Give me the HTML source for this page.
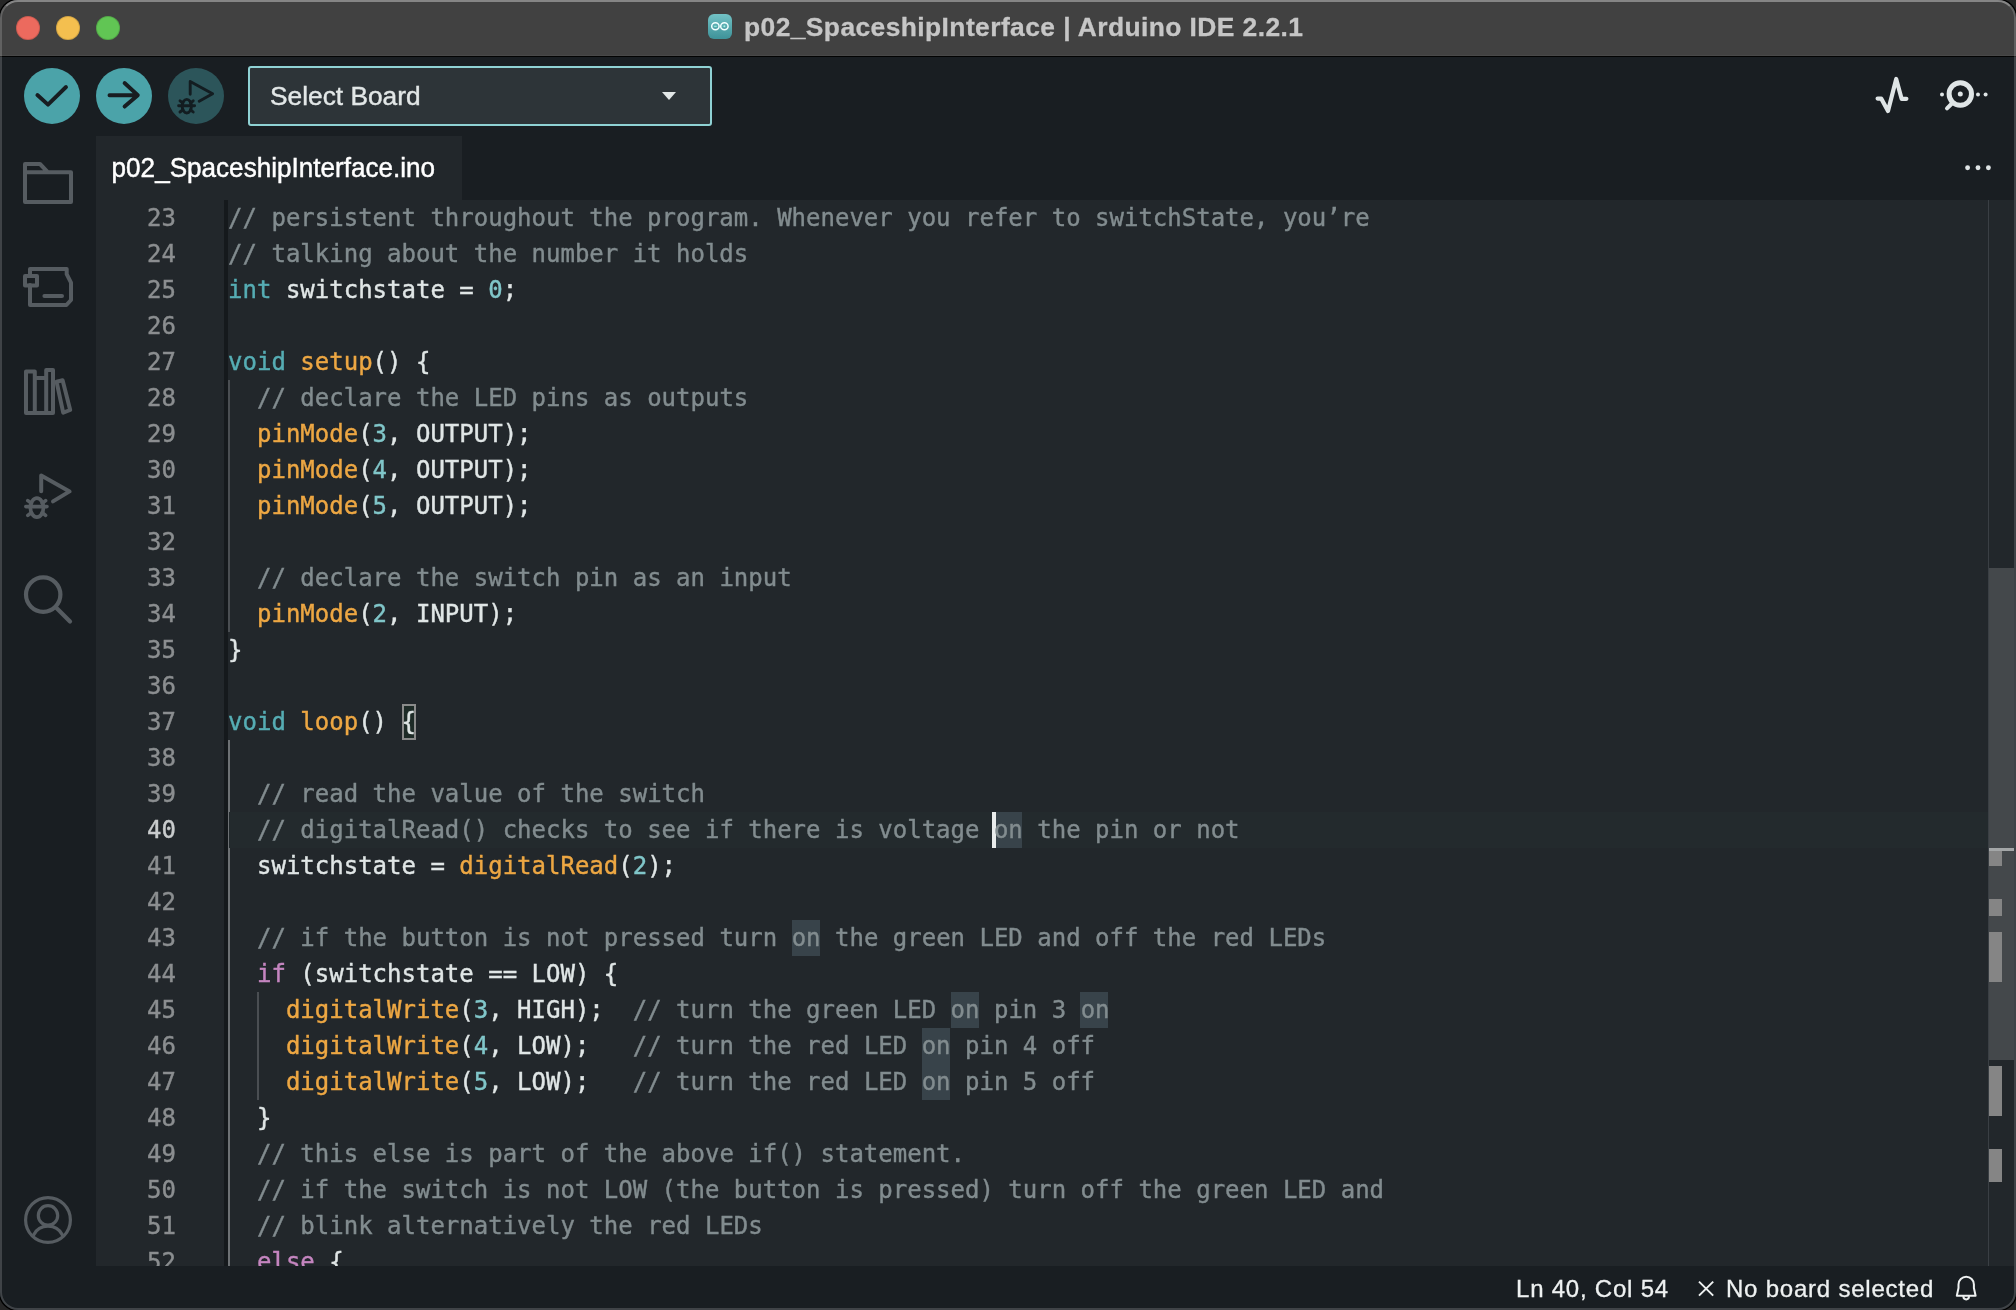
<!DOCTYPE html>
<html lang="en">
<head>
<meta charset="utf-8">
<title>p02_SpaceshipInterface | Arduino IDE 2.2.1</title>
<style>
*{box-sizing:border-box;margin:0;padding:0}
html,body{width:2016px;height:1310px;overflow:hidden;background:#262626}
body{font-family:"Liberation Sans",sans-serif;position:relative}
#win{will-change:transform;position:absolute;left:0;top:0;width:2016px;height:1310px;border-radius:18px;overflow:hidden;background:#191e22;box-shadow:0 0 0 1.5px #000}
#frame{position:absolute;left:0;top:0;width:2016px;height:1310px;border-radius:18px;border:2px solid rgba(255,255,255,.17);border-top-color:rgba(255,255,255,.36);pointer-events:none;z-index:50}
#title{position:absolute;left:0;top:0;width:2016px;height:57px;background:#414141;border-bottom:1px solid #020303;box-shadow:inset 0 -1px 0 #484848}
.tl{position:absolute;top:16px;width:24px;height:24px;border-radius:50%;box-shadow:inset 0 0 0 1px rgba(0,0,0,.14)}
#ttext{position:absolute;left:744px;top:11.5px;-webkit-text-stroke:.3px #c6c6c6;font-size:26.4px;line-height:30px;font-weight:bold;color:#c6c6c6;white-space:nowrap;letter-spacing:.42px}
#ticon{position:absolute;left:707.6px;top:13.9px;width:24.8px;height:24.8px;border-radius:6px;background:linear-gradient(#72c2c5,#3e9299)}
#toolbar{position:absolute;left:0;top:57px;width:2016px;height:79px;background:#191e22}
.btn{position:absolute;top:11px;width:56px;height:56px;border-radius:50%;background:#4ba3a9}
.btn.dis{background:#2c555a}
#board{position:absolute;left:248px;top:9px;width:464px;height:60px;border:2px solid #8fd2d4;border-radius:3px;background:#2d3438;color:#e2e7e7;font-size:26.3px;line-height:56px;padding-left:20px;-webkit-text-stroke:.4px #e2e7e7}
#board i{position:absolute;left:412.4px;top:24.4px;width:0;height:0;border-left:7.6px solid transparent;border-right:7.6px solid transparent;border-top:8.6px solid #e2e7e7}
#side{position:absolute;left:0;top:136px;width:96px;height:1130px;background:#191e22}
#tabs{position:absolute;left:96px;top:136px;width:1920px;height:64px;background:#191e22}
#tab{position:absolute;left:0;top:0;width:366px;height:64px;background:#22272b;color:#fff;font-size:26.1px;line-height:64px;padding-left:15.6px;white-space:nowrap}
#tab span{display:inline-block;height:64px;transform:translateY(.4px) scaleY(1.085);transform-origin:0 40.8px;-webkit-text-stroke:.45px #fff}
#editor{position:absolute;left:96px;top:200px;width:1918px;height:1066px;background:#22272b;overflow:hidden;-webkit-text-stroke:.4px;font-family:"DejaVu Sans Mono","Liberation Mono",monospace;font-size:24px}
#lines{position:absolute;left:0;top:0;width:100%}
.ln{position:relative;height:36px;line-height:36px;white-space:pre;color:#e0e6e6}
.no{position:absolute;left:0;top:0;width:80px;text-align:right;color:#8b8e90}
.act .no{color:#c9cccd}
.tx{position:absolute;left:132.1px;top:0;height:36px}
.c{color:#828c8f}.k{color:#56adb4}.f{color:#eda743}.n{color:#80c6c9}.w{color:#c586c0}
.hl{position:absolute;top:0;height:36px;width:28px;background:#38434a}
.bmb{position:absolute;top:0;height:36px;width:14.2px;border:2px solid #8b8b8b;background:#1e2b27}
.cur{position:absolute;top:0;width:3.6px;height:36px;background:#e9ecec}
.actbg{position:absolute;left:133px;top:0;width:1760px;height:36px;background:#232a2d}
.gd{position:absolute;width:2px;background:#4a4e52}
#gline{position:absolute;left:128px;top:0;width:4px;height:1066px;background:#15191c}
#sbar{position:absolute;left:1892px;top:0;width:26px;height:1066px;border-left:1px solid #3a3f44}
#sbar i{position:absolute;left:0;width:13px;background:#858585}
#slider{position:absolute;left:0;top:368px;width:25px;height:492px;background:#44484b}
#status{position:absolute;left:0;top:1266px;width:2016px;height:44px;background:#191e22;color:#eef1f1;font-size:24px;letter-spacing:.78px;line-height:44px;white-space:nowrap}
#status span{position:absolute;top:1.4px;-webkit-text-stroke:.3px #eef1f1}
</style>
</head>
<body>
<div id="win">
<div id="title">
<div class="tl" style="left:16px;background:#ec6a5e"></div>
<div class="tl" style="left:56px;background:#f4bf4f"></div>
<div class="tl" style="left:96px;background:#61c554"></div>
<div id="ticon"><svg width="24.8" height="24.8" viewBox="0 0 24.8 24.8" fill="none" stroke="#f2ffff" stroke-width="1.5" style="position:absolute;left:0;top:0"><ellipse cx="7.4" cy="12.3" rx="3.7" ry="3.5"/><ellipse cx="16.4" cy="12.3" rx="3.7" ry="3.5"/><path d="M6.1 12.3 H8.7" stroke="#93ead9" stroke-width="1.3"/><circle cx="16.4" cy="12.3" r="1" fill="#a5f3e6" stroke="none"/></svg></div>
<div id="ttext">p02_SpaceshipInterface | Arduino IDE 2.2.1</div>
</div>
<div id="toolbar">
<div class="btn" style="left:24px"></div>
<div class="btn" style="left:96px"></div>
<div class="btn dis" style="left:168px"></div>
<div id="board">Select Board<i></i></div>
</div>
<div id="side"></div>
<div id="tabs"><div id="tab"><span>p02_SpaceshipInterface.ino</span></div></div>
<div id="editor">
<div id="gline"></div>
<div class="gd" style="left:132px;top:180px;height:252px"></div>
<div class="gd" style="left:132px;top:540px;height:526px;background:#6d7174"></div>
<div class="gd" style="left:161px;top:792px;height:108px"></div>
<div id="lines">
<div class="ln"><span class="no">23</span><span class="tx"><span class="c">// persistent throughout the program. Whenever you refer to switchState, you’re</span></span></div>
<div class="ln"><span class="no">24</span><span class="tx"><span class="c">// talking about the number it holds</span></span></div>
<div class="ln"><span class="no">25</span><span class="tx"><span class="k">int</span> switchstate = <span class="n">0</span>;</span></div>
<div class="ln"><span class="no">26</span><span class="tx"></span></div>
<div class="ln"><span class="no">27</span><span class="tx"><span class="k">void</span> <span class="f">setup</span>() {</span></div>
<div class="ln"><span class="no">28</span><span class="tx">  <span class="c">// declare the LED pins as outputs</span></span></div>
<div class="ln"><span class="no">29</span><span class="tx">  <span class="f">pinMode</span>(<span class="n">3</span>, OUTPUT);</span></div>
<div class="ln"><span class="no">30</span><span class="tx">  <span class="f">pinMode</span>(<span class="n">4</span>, OUTPUT);</span></div>
<div class="ln"><span class="no">31</span><span class="tx">  <span class="f">pinMode</span>(<span class="n">5</span>, OUTPUT);</span></div>
<div class="ln"><span class="no">32</span><span class="tx"></span></div>
<div class="ln"><span class="no">33</span><span class="tx">  <span class="c">// declare the switch pin as an input</span></span></div>
<div class="ln"><span class="no">34</span><span class="tx">  <span class="f">pinMode</span>(<span class="n">2</span>, INPUT);</span></div>
<div class="ln"><span class="no">35</span><span class="tx">}</span></div>
<div class="ln"><span class="no">36</span><span class="tx"></span></div>
<div class="ln"><i class="bmb" style="left:306.2px"></i><span class="no">37</span><span class="tx"><span class="k">void</span> <span class="f">loop</span>() {</span></div>
<div class="ln"><span class="no">38</span><span class="tx"></span></div>
<div class="ln"><span class="no">39</span><span class="tx">  <span class="c">// read the value of the switch</span></span></div>
<div class="ln act"><i class="actbg"></i><i class="hl" style="left:897.8px"></i><i class="cur" style="left:896.2px"></i><span class="no">40</span><span class="tx">  <span class="c">// digitalRead() checks to see if there is voltage </span><span class="c">on</span><span class="c"> the pin or not</span></span></div>
<div class="ln"><span class="no">41</span><span class="tx">  switchstate = <span class="f">digitalRead</span>(<span class="n">2</span>);</span></div>
<div class="ln"><span class="no">42</span><span class="tx"></span></div>
<div class="ln"><i class="hl" style="left:695.7px"></i><span class="no">43</span><span class="tx">  <span class="c">// if the button is not pressed turn </span><span class="c">on</span><span class="c"> the green LED and off the red LEDs</span></span></div>
<div class="ln"><span class="no">44</span><span class="tx">  <span class="w">if</span> (switchstate == LOW) {</span></div>
<div class="ln"><i class="hl" style="left:984.4px"></i><i class="hl" style="left:854.5px"></i><span class="no">45</span><span class="tx">    <span class="f">digitalWrite</span>(<span class="n">3</span>, HIGH);  <span class="c">// turn the green LED </span><span class="c">on</span><span class="c"> pin 3 </span><span class="c">on</span></span></div>
<div class="ln"><i class="hl" style="left:825.6px"></i><span class="no">46</span><span class="tx">    <span class="f">digitalWrite</span>(<span class="n">4</span>, LOW);   <span class="c">// turn the red LED </span><span class="c">on</span><span class="c"> pin 4 off</span></span></div>
<div class="ln"><i class="hl" style="left:825.6px"></i><span class="no">47</span><span class="tx">    <span class="f">digitalWrite</span>(<span class="n">5</span>, LOW);   <span class="c">// turn the red LED </span><span class="c">on</span><span class="c"> pin 5 off</span></span></div>
<div class="ln"><span class="no">48</span><span class="tx">  }</span></div>
<div class="ln"><span class="no">49</span><span class="tx">  <span class="c">// this else is part of the above if() statement.</span></span></div>
<div class="ln"><span class="no">50</span><span class="tx">  <span class="c">// if the switch is not LOW (the button is pressed) turn off the green LED and</span></span></div>
<div class="ln"><span class="no">51</span><span class="tx">  <span class="c">// blink alternatively the red LEDs</span></span></div>
<div class="ln"><span class="no">52</span><span class="tx">  <span class="w">else</span> {</span></div></div>
<div id="sbar"><div id="slider"></div>
<i style="top:649px;height:17px"></i><i style="top:699px;height:17px"></i><i style="top:732px;height:50px"></i><i style="top:866px;height:50px"></i><i style="top:949px;height:33px"></i>
<b style="position:absolute;left:0;top:648px;width:25px;height:3px;background:#a3a6a7"></b>
</div>
</div>
<div id="status"><span style="left:1516px">Ln 40, Col 54</span><span style="left:1726px">No board selected</span></div>
<svg id="icons" width="2016" height="1310" viewBox="0 0 2016 1310" style="position:absolute;left:0;top:0;z-index:20" fill="none" stroke-linecap="round" stroke-linejoin="round">
<!-- toolbar buttons glyphs -->
<g stroke="#181d21" stroke-width="3.9">
<path d="M37.4 95 L48 104.6 L66 87"/>
<path d="M109.5 95.2 H137 M124.6 83 L137.8 95.2 L124.6 106.6"/>
</g>
<g stroke="#131d21" stroke-width="2.9">
<path d="M190.2 94.2 V81.4 L212.6 93.8 L199.2 101.2"/>
<ellipse cx="186.8" cy="106.2" rx="4.6" ry="6.8"/>
<path d="M178.6 105.8 H194.6 M180 100.8 L182.8 103 M193.2 100.8 L190.6 103 M180 112 L182.8 109.8 M193.2 112 L190.6 109.8"/>
</g>
<!-- serial plotter / monitor -->
<g stroke="#dfe5e6" stroke-width="4.2">
<path d="M1877.6 98.6 H1881.2 L1888 111 L1896.2 79 L1901.6 98.8 H1906.4"/>
<circle cx="1960.3" cy="94" r="11.2" stroke-width="5"/>
<path d="M1951.4 104 L1947 108.4" stroke-width="4"/>
</g>
<g fill="#dfe5e6" stroke="none">
<circle cx="1960.3" cy="94" r="2.5"/>
<circle cx="1942" cy="94.6" r="2"/><circle cx="1978" cy="94.6" r="2"/><circle cx="1985.6" cy="94.6" r="2"/>
<circle cx="1967.6" cy="167.7" r="2.45"/><circle cx="1978" cy="167.7" r="2.45"/><circle cx="1988.4" cy="167.7" r="2.45"/>
</g>
<!-- sidebar -->
<g stroke="#565c61" stroke-width="4" stroke-linejoin="miter">
<path d="M25 164 H40 L48 172.3 H71 V202 H25 Z M25 172.3 H48" stroke-linejoin="round"/>
<path d="M30 276 V269 H66.7 V274.2 L71 282.6 V300 L66.4 305 H30 V285" stroke-linejoin="round"/>
<rect x="25" y="276" width="12" height="9.4" stroke-linejoin="round"/>
<path d="M44.4 296 H62"/>
<path d="M26 371.4 H34.8 V413 H26 Z M34.8 378 H46.2 M34.8 413 H46.2 M46.2 370 H53 V413 H46.2 Z" stroke-linejoin="round"/>
<path d="M56.6 381.8 L62.6 380.2 L70.2 410 L63.2 412.6 Z" stroke-linejoin="round"/>
<path d="M41.2 491.2 V475.4 L69.6 491.4 L53 501.4" stroke-linejoin="round"/>
<ellipse cx="36.9" cy="507.7" rx="6.5" ry="9.5" stroke-width="3.7"/>
<path d="M25.8 506.6 H47 M27.8 500.6 L31.4 503.2 M45.6 500.6 L42.2 503.2 M27.8 515.4 L31.4 512.6 M45.6 515.4 L42.2 512.6" stroke-width="3.6"/>
<circle cx="43.2" cy="594.6" r="17.2" stroke-width="4.2"/>
<path d="M56 607.4 L70 621.4" stroke-width="4.2"/>
<circle cx="48" cy="1220" r="22.4" stroke-width="3.2"/>
<circle cx="48" cy="1215.4" r="9.7" stroke-width="3.2"/>
<path d="M33.6 1235 A16.2 16.2 0 0 1 62.4 1235" stroke-width="3.2"/>
</g>
<!-- status bar icons -->
<g stroke="#eef1f1" stroke-width="2">
<path d="M1699 1281.6 L1713.2 1295.6 M1713.2 1281.6 L1699 1295.6" stroke-linecap="butt"/>
<path d="M1956.8 1295.7 H1975.6 L1973.9 1288 V1284.4 A7.7 7.7 0 0 0 1958.5 1284.4 V1288 Z"/>
<path d="M1963.4 1296.6 A2.8 2.8 0 0 0 1969 1296.6"/>
</g>
</svg>
</div>
<div id="frame"></div>
</body>
</html>
